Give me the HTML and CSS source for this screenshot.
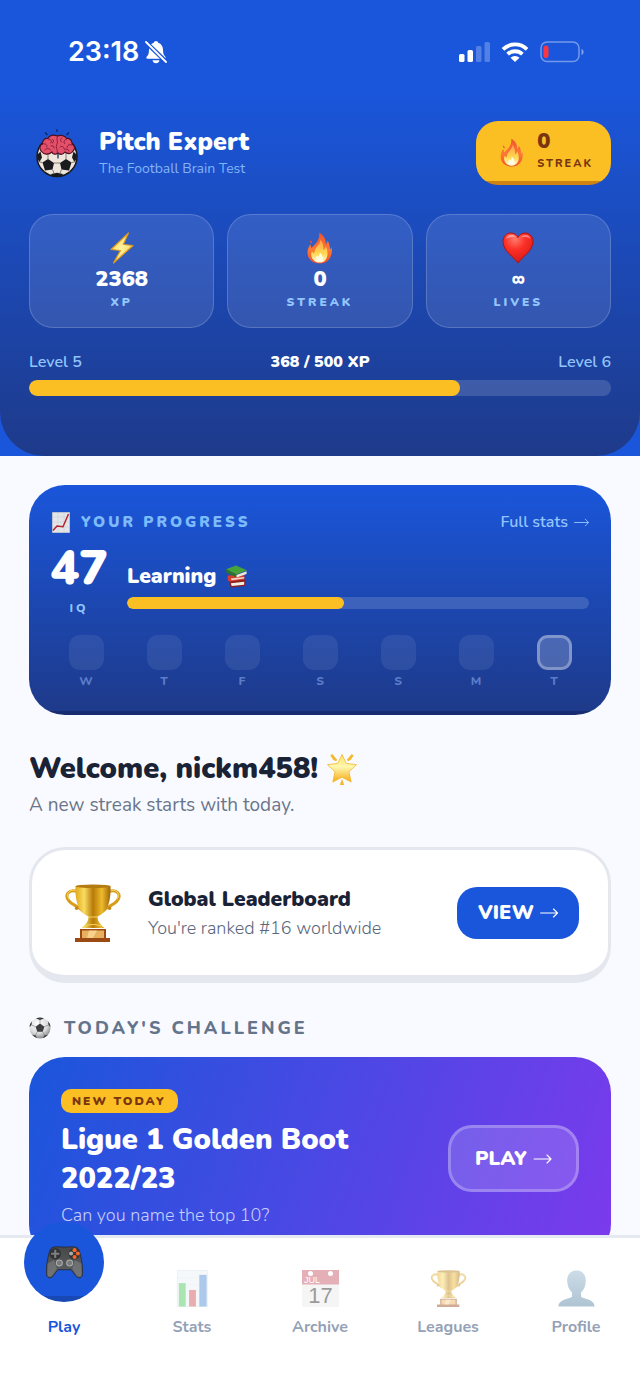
FILE: index.html
```html
<!DOCTYPE html>
<html lang="en">
<head>
<meta charset="utf-8">
<meta name="viewport" content="width=device-width, initial-scale=1">
<title>Pitch Expert</title>
<link rel="stylesheet" href="styles.css">
</head>
<body>
<svg class="defs" aria-hidden="true">
  <defs>
    <linearGradient id="flameOuter" x1="0" y1="0" x2="0" y2="1"><stop offset="0" stop-color="#f2502e"/><stop offset=".55" stop-color="#fb7a35"/><stop offset="1" stop-color="#f4502a"/></linearGradient>
    <linearGradient id="flameInner" x1="0" y1="0" x2="0" y2="1"><stop offset="0" stop-color="#ffa04a"/><stop offset=".6" stop-color="#ffd84f"/><stop offset="1" stop-color="#fffbd0"/></linearGradient>
    <linearGradient id="gold" x1="0" y1="0" x2="1" y2="0"><stop offset="0" stop-color="#e2a91c"/><stop offset=".25" stop-color="#f9dc62"/><stop offset=".5" stop-color="#b87a08"/><stop offset=".75" stop-color="#eebb2c"/><stop offset="1" stop-color="#9c6504"/></linearGradient>
    <linearGradient id="bolt" x1="0" y1="0" x2="1" y2="1"><stop offset="0" stop-color="#ffc928"/><stop offset=".5" stop-color="#fff3a0"/><stop offset="1" stop-color="#f6b21b"/></linearGradient>
    <radialGradient id="heart" cx=".4" cy=".2" r=".9"><stop offset="0" stop-color="#ff7a6e"/><stop offset=".4" stop-color="#fb3027"/><stop offset="1" stop-color="#cf1512"/></radialGradient>
    <linearGradient id="star" x1="0" y1="0" x2="0" y2="1"><stop offset="0" stop-color="#ffe36a"/><stop offset=".45" stop-color="#fff7b0"/><stop offset="1" stop-color="#f5a80f"/></linearGradient>
    <radialGradient id="ball" cx=".4" cy=".3" r=".75"><stop offset="0" stop-color="#ffffff"/><stop offset=".6" stop-color="#dcdcdc"/><stop offset="1" stop-color="#7d7d7d"/></radialGradient>
    <linearGradient id="person" x1="0" y1="0" x2="0" y2="1"><stop offset="0" stop-color="#8fb3cc"/><stop offset="1" stop-color="#4f7d9f"/></linearGradient>
    <linearGradient id="pad" x1="0" y1="0" x2="0" y2="1"><stop offset="0" stop-color="#46484a"/><stop offset="1" stop-color="#5f6163"/></linearGradient>

    <symbol id="i-fire" viewBox="0 0 28 34">
      <path fill="url(#flameOuter)" d="M13 .5c5 3 7.500 7 7 12.500 1.200-1 1.800-2.500 2-4 2.500 3 2.200 6.500 2.800 9.500.8-.6 1.300-1.400 1.500-2.500C28 25.500 23 33.500 14 33.500S0 27.500.8 20.500c.3-3 1.700-5 2.700-7.500.8 1.200 1.200 2.500 1.200 4C9 13.500 14.500 8 13 .5z"/>
      <path fill="#f2502e" d="M3.500 9c1.500.3 2.300 1.500 2 3-1.500 0-2.300-1.500-2-3z"/>
      <path fill="url(#flameInner)" d="M14.500 8c3.500 4.500 3 8.500 3 11 1.500-.8 2.300-2 2.700-3.500 4 8.500 1 17-6.500 17S3 25 5.500 20.500c.7 1.200 1.500 1.700 2.300 2C8 16.500 14.500 14 14.500 8z"/>
      <path fill="#fffde0" d="M14 22c4 4 4.500 10-.3 10s-4.900-4.500-2.700-7c.6.8 1.200 1.200 1.800 1.200C12.800 24.500 13.500 23.500 14 22z"/>
    </symbol>

    <symbol id="i-bolt" viewBox="0 0 24 32">
      <path fill="url(#bolt)" stroke="#e09a1a" stroke-width="1.200" stroke-linejoin="round" d="M18.500 1 1 17.500l9.500 1L3.500 31 23 13.500l-9.800-1z"/>
    </symbol>

    <symbol id="i-heart" viewBox="0 0 32 32">
      <path fill="url(#heart)" stroke="#b3120f" d="M16 31C12 25 1 19 1 9.500 1 4.500 4.500 1 8.700 1c3.300 0 5.800 1.600 7.300 4.500C17.500 2.600 20 1 23.300 1 27.500 1 31 4.500 31 9.500 31 19 20 25 16 31z"/>
      <path fill="#fff" opacity=".4" d="M4 7c.8-3 3-4.300 5-4.200 2.300.1 4 1.200 4.500 2.400C10 4.500 7 5 4 7zm15-1.500c1.300-2 3-2.700 5-2.600 2.300.2 4 1.600 4.600 4C26 5 22 4.700 19 5.500z"/>
    </symbol>

    <symbol id="i-trophy" viewBox="0 0 56 58">
      <g fill="none" stroke="#d89e1b" stroke-width="3" stroke-linecap="round"><path d="M13 8C4 4-1 11 4 17c3 4 9 5 14 10"/><path d="M43 8c9-4 14 3 9 9-3 4-9 5-14 10"/></g>
      <g fill="none" stroke="#f6d667"><path d="M12 7C5 4 0 10 4 15"/><path d="M44 7c7-3 12 3 8 8"/></g>
      <path fill="#c8891a" d="M11.500 26a1.800 1.800 0 1 1 .1 0zM44.500 26a1.800 1.800 0 1 1 .1 0z"/>
      <path fill="url(#gold)" d="M10.500 2h35c.5 14-2 26-13 30.500 0 4 1.500 7 7 11.500h-23c5.500-4.500 7-7.500 7-11.500C12.500 28 10 16 10.500 2z"/>
      <ellipse cx="28" cy="2.200" rx="17.500" ry="1.800" fill="#b47c10"/>
      <path fill="none" stroke="#f5d35c" d="M23 33h10M20 42c5-2 11-2 16 0"/>
      <path fill="#9b4a14" d="M15 45h26v9h4v4H10v-4h5z"/>
      <path fill="#e8b160" d="M17 46.500h22V54H17z"/>
      <path fill="#ffe0a0" opacity=".7" d="M24 46.500h8L28 54h-6z"/>
    </symbol>

    <symbol id="i-chart" viewBox="0 0 18 21">
      <path fill="#e3e5e9" stroke="#b9c2cf" d="M.5.500h17v20H.5z"/>
      <path stroke="#c9d0da" stroke-width=".6" d="M1 5h16M1 10h16M1 15h16M6 1v19M12 1v19"/>
      <path fill="none" stroke="#b8242b" stroke-width="1.500" d="m1 18.500 4-4.500 6 .8L16.500 2"/>
    </symbol>

    <symbol id="i-books" viewBox="0 0 24 24">
      <path fill="#8c1e1e" d="M4 16.500 20 15l2 2-1.500 5L6 23.500z"/><path fill="#f1eee4" d="m6 19 14-1.500v3L7 22z"/>
      <path fill="#d43d2f" d="m3 11 17-1 .5 5L5 17.500c-2 0-3-4-2-6.500z"/><path fill="#f3d4c6" d="m6 14 14-1.500V14L7 16z"/>
      <path fill="#46a33b" d="M1 4.500 11.500.5 23 5.500 12 10z"/><path fill="#2d7428" d="M1 4.500 12 10v3L1.500 8z"/><path fill="#eee9db" d="M12 10.500 22.500 6.500v3L12 13z"/>
    </symbol>

    <symbol id="i-star" viewBox="0 0 32 34">
      <path fill="url(#star)" stroke="#f3b62a" stroke-width=".8" stroke-linejoin="round" d="m16 1.500 4.300 9.200L31 12l-7.800 7.300L25.500 30 16 25l-9.500 5 2.300-10.700L1 12l10.700-1.300z"/>
      <path fill="#f4b92e" d="M4 2.500 6 1l5 6-1 1.500-3-1.300zM28 2.500 26 1l-5 6 1 1.500 3-1.300zM16 26.500l2.300 6.500h-4.600z"/>
    </symbol>

    <symbol id="i-ball" viewBox="0 0 22 22">
      <circle cx="11" cy="11" r="10.500" fill="url(#ball)"/>
      <path fill="#3d3d3f" d="m11 6.500 4.400 3.200-1.700 5H8.300l-1.700-5zM7 1.500 11 3l4-1.500C12.500.3 9.500.3 7 1.500zM.6 10 2.500 8 3 4.500C1.300 6 .4 8 .6 10zm20.800 0L19.500 8 19 4.500c1.700 1.500 2.600 3.500 2.400 5.500zM3.500 18l3 .3L8 21c-1.800-.6-3.300-1.600-4.500-3zm15 0-3 .3L14 21c1.800-.6 3.300-1.600 4.500-3z"/>
      <path fill="none" stroke="#7b7b7b" stroke-width=".6" d="M11 3v3.500M2.500 8l4.100 1.700M19.500 8l-4.100 1.700M6.500 18.300l1.800-3.600M15.500 18.300l-1.800-3.600"/>
    </symbol>

    <symbol id="i-bars" viewBox="0 0 32 38">
      <path fill="#eaf1f4" stroke="#d5e0e5" d="M.5.500h31v37H.5z"/>
      <path stroke="#d9e3e8" stroke-width=".6" d="M1 8h30M1 15h30M1 22h30M1 29h30"/>
      <path fill="#42c455" d="M2 13.500h7v24H2z"/><path fill="#cf4a50" d="M12.500 20.500h7v17h-7z"/><path fill="#4a86d4" d="M23 5h7.500v32.500H23z"/>
    </symbol>

    <symbol id="i-calendar" viewBox="0 0 37 37">
      <path fill="#e9e9e9" d="M0 0h37v37H0z"/><path fill="#c65062" d="M0 0h37v14.500H0z"/>
      <circle cx="8.500" cy="3.500" r="2.500" fill="#fff"/><circle cx="28.500" cy="3.500" r="2.500" fill="#fff"/>
      <text class="cal-text" x="2" y="13" font-size="9" fill="#fff">JUL</text>
      <text class="cal-text" x="18.500" y="33" font-size="22" text-anchor="middle" fill="#222">17</text>
    </symbol>

    <symbol id="i-person" viewBox="0 0 36 37">
      <path fill="url(#person)" d="M18 .5c6 0 9.500 4.200 9.300 10.500-.1 5-2 9-4.800 11.500v4c1 2.500 13.500 2 13.500 10H0c0-8 12.500-7.500 13.500-10v-4C10.700 20 8.800 16 8.700 11 8.500 4.700 12 .5 18 .5z"/>
    </symbol>

    <symbol id="i-pad" viewBox="0 0 36 32">
      <path fill="url(#pad)" stroke="#262a30" stroke-width=".8" d="M6 1.500C10 0 12 1 18 1s8-1 12 .5c3.500 1 6 18.500 5.600 25.500-.3 4.500-4 5-6.600 2L24.500 23h-13L7 29c-2.600 3-6.300 2.500-6.600-2C0 20 2.500 2.500 6 1.500z"/>
      <path fill="#858789" opacity=".5" d="M1.500 17 8 13.500l2.500 8.500L6 28.500c-2 2-4.300 1.500-4.500-1zM34.500 17 28 13.500 25.500 22l4.500 6.500c2 2 4.300 1.500 4.500-1z"/>
      <circle cx="9" cy="7.500" r="5.500" fill="#2f3133"/><circle cx="27.500" cy="7.500" r="5.500" fill="#2f3133"/>
      <path fill="#7d7f81" d="M8 3.500h2v3h3v2h-3v3H8v-3H5v-2h3z"/>
      <circle cx="27.800" cy="4" r="2" fill="#f5662a"/><circle cx="31" cy="7.300" r="2" fill="#f5662a"/><circle cx="24.400" cy="7.300" r="2" fill="#a9abad"/><circle cx="27.800" cy="10.600" r="2" fill="#f5662a"/>
      <g fill="#77797b" stroke="#a9abad"><circle cx="13" cy="16.500" r="2.900"/><circle cx="23" cy="16.500" r="2.900"/></g>
    </symbol>

    <symbol id="i-arrow" viewBox="0 0 18 10">
      <path fill="none" stroke="currentColor" stroke-width="1.100" stroke-linecap="round" stroke-linejoin="round" d="M.6 5h16.800M13.500 1l4 4-4 4"/>
    </symbol>
  </defs>
</svg>

<div class="app">
  <div class="scroll">
    <div class="top">
      <div class="status">
        <div class="status-group">
          <span class="clock">23:18</span>
          <svg width="22" height="24" viewBox="0 0 22 24" role="img" aria-label="Silent">
            <path fill="#fff" d="M11 1c1.200 0 2 .8 2.200 1.800 3.200 1 4.800 3.700 4.800 7 0 4 .8 5.500 2.300 7 .8.900.4 2-.8 2H2.500c-1.200 0-1.600-1.100-.8-2C3.200 15.300 4 13.800 4 9.800c0-3.300 1.600-6 4.800-7C9 1.800 9.800 1 11 1zM7.500 20.300h7c-.3 1.700-1.700 3-3.500 3s-3.200-1.300-3.500-3z"/>
            <path stroke="#1a56db" stroke-width="4.500" d="M0 1.500 22 22.500"/>
            <path stroke="#fff" stroke-width="1.800" stroke-linecap="round" d="M1 2 21 22"/>
          </svg>
        </div>
        <div class="status-group">
          <svg width="32" height="20" viewBox="0 0 32 20" role="img" aria-label="Signal">
            <rect x="1" y="12" width="5.500" height="8" rx="1.600" fill="#fff"/><rect x="9.500" y="8" width="5.500" height="12" rx="1.600" fill="#fff"/>
            <rect x="18" y="4" width="5.500" height="16" rx="1.600" fill="#fff" opacity=".25"/><rect x="26.500" y="0" width="5.500" height="20" rx="1.600" fill="#fff" opacity=".25"/>
          </svg>
          <svg class="wifi" width="28" height="20" viewBox="0 0 28 20" role="img" aria-label="Wi-Fi">
            <g fill="none" stroke="#fff" stroke-width="3.800"><path d="M2 7.300a17.300 17.300 0 0 1 24 0"/><path d="M6.600 12.200a10.700 10.700 0 0 1 14.800 0"/></g>
            <path fill="#fff" d="M14 20 9.500 15.700a6.500 6.500 0 0 1 9 0z"/>
          </svg>
          <svg width="44" height="22" viewBox="0 0 44 22" role="img" aria-label="Battery low">
            <rect x="1" y="1" width="38" height="19.500" rx="6" fill="none" stroke="#fff" stroke-width="1.500" opacity=".4"/>
            <rect x="3.500" y="4.500" width="5" height="12.500" rx="2.500" fill="#fb3640"/>
            <path fill="#fff" opacity=".45" d="M41.500 8c2.800 1 2.800 5 0 6z"/>
          </svg>
        </div>
      </div>

      <header class="header">
        <div class="brand">
          <svg class="logo" viewBox="-1 0 56 62" role="img" aria-label="Pitch Expert logo">
            <circle cx="27" cy="34.500" r="20" fill="#efe6dc" stroke="#191919" stroke-width="1.500"/>
            <path fill="#1b1b1d" d="m12.500 40.500 5.500-3.500 6 4-1.500 6.500-7.500 1zM41.500 40.500 36 37l-6 4 1.500 6.500 7.500 1zM7 33l3.500-3.500 1.500 6-2.500 4.500C8 38 7 35.500 7 33zM47 33l-3.500-3.500-1.500 6 2.500 4.500C46 38 47 35.500 47 33zM21 52l6-1.200 6 1.200-1.500 2.500h-9z"/>
            <path fill="none" stroke="#6b6058" stroke-width=".8" d="M18 37v-7M36 37v-7M24 41h6M22.500 47.500l1.500 3.800M31.500 47.500 30 51.300M12.500 40.500l-3-.5M41.500 40.500l3-.5M15 48.500 14 50M39 48.500l1 1.500"/>
            <g transform="translate(3 1) scale(.9 1)">
              <path fill="#e2506a" stroke="#4b0e1c" stroke-width="1.200" d="M9 28c-3-3-.5-6.500 1.500-7 0-4 3-6 6-5.500 2-3 6-4 10.500-2.500 4-1.500 8.500-.5 10.500 2.500 3.500-.5 6 2 6 5.500 3 1.500 3.500 5 1 7-2 3.500-6.500 3-9 1-2 2.500-5 3-7.500 1-3 2-6 1.500-7-1-3.500 3-9 3-12-1z"/>
              <path fill="none" stroke="#8c1a33" stroke-width="1" stroke-linecap="round" d="M27 13.500c-1.500 3 1.500 5-.5 8s1.500 5 .5 8M17 16c3 0 4 2 3 4M11 21c3-1 5 1 4.500 3M22 16.500c1.500 1 1 3-.5 3.500M13 27c2-2 5-2 6.500 0M20 23c2-1 3 0 3.500 2M32 15c-2 1-2 3 0 4M37 16.500c-2 0-3.500 2-2 4M43 22c-3-1-5 0-5 2.500M30 24c2-1.500 4-.5 4.500 1.500M40 28c-1-2-3-2.500-5-1.500"/>
            </g>
            <path fill="none" stroke="#10204f" stroke-width="1.200" stroke-linecap="round" d="M27 7.500v2M15.500 11l1.500 1.500M38.500 11 37 12.500M28 32v4"/>
          </svg>
          <div class="brand-text">
            <h1>Pitch Expert</h1>
            <p>The Football Brain Test</p>
          </div>
          <div class="streak">
            <svg width="24" height="29"><use href="#i-fire"/></svg>
            <div class="streak-text"><strong>0</strong><span>STREAK</span></div>
          </div>
        </div>

        <div class="stats">
          <div class="stat"><svg width="32" height="32"><use href="#i-bolt"/></svg><strong>2368</strong><span>XP</span></div>
          <div class="stat"><svg width="32" height="32"><use href="#i-fire"/></svg><strong>0</strong><span>STREAK</span></div>
          <div class="stat"><svg width="32" height="32"><use href="#i-heart"/></svg><strong>∞</strong><span>LIVES</span></div>
        </div>

        <div class="levels"><span>Level 5</span><strong>368 / 500 XP</strong><span>Level 6</span></div>
        <div class="bar"><div class="fill" style="width:74%"></div></div>
      </header>
    </div>

    <main class="main">
      <section class="progress">
        <div class="progress-head">
          <svg width="20" height="21"><use href="#i-chart"/></svg>
          <h2>YOUR PROGRESS</h2>
          <a href="#stats">Full stats <svg width="15" height="9"><use href="#i-arrow"/></svg></a>
        </div>
        <div class="iq-row">
          <div class="iq"><strong>47</strong><span>IQ</span></div>
          <div class="rank">
            <div class="rank-name">Learning <svg width="23" height="23"><use href="#i-books"/></svg></div>
            <div class="bar bar-small"><div class="fill" style="width:47%"></div></div>
          </div>
        </div>
        <div class="days">
          <div class="day"><i></i>W</div><div class="day"><i></i>T</div><div class="day"><i></i>F</div><div class="day"><i></i>S</div><div class="day"><i></i>S</div><div class="day"><i></i>M</div><div class="day today"><i></i>T</div>
        </div>
      </section>

      <section class="welcome">
        <h2>Welcome, nickm458! <svg width="32" height="33"><use href="#i-star"/></svg></h2>
        <p>A new streak starts with today.</p>
      </section>

      <section class="board">
        <svg width="56" height="58"><use href="#i-trophy"/></svg>
        <div class="board-text">
          <h3>Global Leaderboard</h3>
          <p>You're ranked #16 worldwide</p>
        </div>
        <button class="btn" type="button">VIEW <svg width="18" height="10"><use href="#i-arrow"/></svg></button>
      </section>

      <h2 class="section-title"><svg width="22" height="22"><use href="#i-ball"/></svg>TODAY'S CHALLENGE</h2>

      <section class="challenge">
        <div class="challenge-text">
          <span class="tag">NEW TODAY</span>
          <h3>Ligue 1 Golden Boot 2022/23</h3>
          <p>Can you name the top 10?</p>
        </div>
        <button class="btn btn-ghost" type="button">PLAY <svg width="19" height="10"><use href="#i-arrow"/></svg></button>
      </section>
    </main>
  </div>

  <nav class="nav">
    <a class="tab active" href="#play"><span class="bubble"><svg width="37" height="33"><use href="#i-pad"/></svg></span>Play</a>
    <a class="tab" href="#stats"><svg width="37" height="37"><use href="#i-bars"/></svg>Stats</a>
    <a class="tab" href="#archive"><svg width="37" height="37"><use href="#i-calendar"/></svg>Archive</a>
    <a class="tab" href="#leagues"><svg width="37" height="37"><use href="#i-trophy"/></svg>Leagues</a>
    <a class="tab" href="#profile"><svg width="37" height="37"><use href="#i-person"/></svg>Profile</a>
  </nav>
</div>
</body>
</html>
```

FILE: styles.css
```css
* { box-sizing: border-box; margin: 0; padding: 0; }

body {
  font-family: Nunito, Lato, "Open Sans", sans-serif;
  background: #f8faff;
  color: #1a2236;
}

svg { display: block; flex: none; }
a { text-decoration: none; }
.defs { position: absolute; width: 0; height: 0; }
.cal-text { font-family: "Liberation Sans", sans-serif; font-weight: 400; }

.app { display: flex; flex-direction: column; height: 100vh; }
.scroll { flex: 1; min-height: 0; overflow-y: auto; scrollbar-width: none; }

/* Top area */
.top { background: #1a56db; color: #fff; }
.status {
  display: flex;
  justify-content: space-between;
  align-items: center;
  height: 92px;
  padding: 12px 56px 0 68px;
}
.status-group { display: flex; align-items: center; gap: 6px; }
.clock { font: 600 27px/32px Inter, sans-serif; }
.wifi { margin: 0 5px; }

.header {
  padding: 29px 29px 60px;
  background: linear-gradient(#1a56db, #1e3a8a);
  border-radius: 0 0 44px 44px;
}
.brand { display: flex; align-items: center; }
.logo { width: 56px; height: 62px; }
.brand-text { flex: 1; padding-left: 14px; }
.brand-text h1 { font-size: 25px; line-height: 32px; font-weight: 900; }
.brand-text p { font-size: 14px; line-height: 22px; color: #83b4f8; }

.streak {
  display: flex;
  align-items: center;
  gap: 13px;
  height: 64px;
  padding: 0 18px 2px 24px;
  border-radius: 22px;
  background: linear-gradient(#fbbf24, #fbbf24) top / 100% calc(100% - 4px) no-repeat #d08310;
  color: #78350f;
}
.streak-text { display: flex; flex-direction: column; }
.streak-text strong { font-size: 22px; line-height: 24px; font-weight: 900; }
.streak-text span { font-size: 11px; line-height: 22px; font-weight: 800; letter-spacing: 2px; }

.stats { display: grid; grid-template-columns: repeat(3, 1fr); gap: 13px; margin-top: 29px; }
.stat {
  display: flex;
  flex-direction: column;
  align-items: center;
  padding: 17px 14px 16px;
  border: 1px solid rgba(255, 255, 255, .18);
  border-radius: 24px;
  background: rgba(255, 255, 255, .1);
}
.stat strong { font-size: 22px; line-height: 30px; font-weight: 900; }
.stat span { font-size: 12px; line-height: 17px; font-weight: 900; letter-spacing: 3px; color: #93c5fd; }

.levels {
  display: flex;
  justify-content: space-between;
  margin: 23px 0 7px;
  font-size: 16px;
  line-height: 22px;
  font-weight: 600;
  color: #93c5fd;
}
.levels strong { font-weight: 900; color: #fff; }

.bar { height: 16px; border-radius: 8px; background: rgba(255, 255, 255, .15); overflow: hidden; }
.bar .fill { height: 100%; border-radius: 8px; background: #fbbf24; }
.bar-small { height: 12px; }

/* Content */
.main { padding: 29px; }

.progress {
  padding: 25px 18px 26px;
  border-radius: 36px;
  background: linear-gradient(#1a56db, #1e3a8a) top / 100% calc(100% - 4px) no-repeat #172c70;
  color: #fff;
}
.progress-head { display: flex; align-items: center; padding: 0 4px; line-height: 24px; }
.progress-head h2 { flex: 1; padding-left: 10px; font-size: 15px; font-weight: 900; letter-spacing: 3px; color: #7dbcfb; }
.progress-head a { display: flex; align-items: center; gap: 6px; font-size: 16px; font-weight: 600; color: #93c5fd; }
.iq-row { display: flex; align-items: flex-end; gap: 20px; padding: 9px 4px 0; }
.iq { display: flex; flex-direction: column; align-items: center; width: 56px; }
.iq strong { font-size: 48px; line-height: 50px; font-weight: 900; }
.iq span { margin-top: 7px; font-size: 12px; line-height: 16px; font-weight: 800; letter-spacing: 3px; color: #93c5fd; }
.rank { flex: 1; padding-bottom: 7px; }
.rank-name { display: flex; align-items: center; gap: 9px; margin-bottom: 7px; font-size: 21px; line-height: 28px; font-weight: 900; }
.days { display: grid; grid-template-columns: repeat(7, 1fr); margin-top: 19px; }
.day { display: flex; flex-direction: column; align-items: center; gap: 3px; font-size: 12px; line-height: 16px; font-weight: 800; color: #5d7cc8; }
.day i { width: 35px; height: 35px; border-radius: 11px; background: rgba(255, 255, 255, .08); }
.today i { border: 3px solid rgba(255, 255, 255, .3); background: rgba(255, 255, 255, .2); }

.welcome { margin-top: 36px; }
.welcome h2 { display: flex; align-items: center; gap: 8px; font-size: 29px; line-height: 36px; font-weight: 900; }
.welcome p { margin-top: 5px; font-size: 19px; line-height: 26px; color: #6b7589; }

.board {
  display: flex;
  align-items: center;
  margin-top: 29px;
  padding: 34px 29px 33px 33px;
  border: 3px solid #e4e8ee;
  border-bottom-width: 8px;
  border-radius: 36px;
  background: #fff;
}
.board-text { flex: 1; padding-left: 27px; }
.board-text h3 { font-size: 21px; line-height: 30px; font-weight: 900; }
.board-text p { font-size: 18px; line-height: 28px; font-weight: 300; color: #5c677c; }

.btn {
  display: flex;
  align-items: center;
  gap: 6px;
  height: 52px;
  padding: 0 21px;
  border: 0;
  border-radius: 20px;
  background: #1a56db;
  color: #fff;
  font: 900 20px/26px Nunito, Lato, "Open Sans", sans-serif;
}
.btn-ghost {
  height: 67px;
  padding: 0 24px;
  border: 3px solid rgba(255, 255, 255, .25);
  border-radius: 24px;
  background: rgba(255, 255, 255, .15);
}

.section-title {
  display: flex;
  align-items: center;
  gap: 13px;
  margin: 33px 0 17px;
  font-size: 18px;
  line-height: 24px;
  font-weight: 800;
  letter-spacing: 3px;
  color: #64748b;
}

.challenge {
  display: flex;
  align-items: center;
  gap: 24px;
  padding: 32px;
  border-radius: 36px;
  background: linear-gradient(110deg, #1a56db, #7c3aed);
  color: #fff;
}
.challenge-text { flex: 1; }
.tag {
  display: inline-block;
  padding: 1px 12px 0 11px;
  border-radius: 10px;
  background: #fbbf24;
  color: #78350f;
  font-size: 12px;
  line-height: 23px;
  font-weight: 900;
  letter-spacing: 2px;
  vertical-align: top;
}
.challenge h3 { max-width: 320px; margin-top: 7px; font-size: 29px; line-height: 39px; font-weight: 900; }
.challenge p { margin-top: 4px; font-size: 18px; line-height: 26px; font-weight: 300; color: #c6cef9; }

/* Bottom tabs */
.nav {
  position: relative;
  display: grid;
  grid-template-columns: repeat(5, 1fr);
  height: 156px;
  border-top: 3px solid #e5e9f1;
  background: #fff;
}
.tab {
  display: flex;
  flex-direction: column;
  align-items: center;
  padding-top: 32px;
  font-size: 16px;
  line-height: 22px;
  font-weight: 700;
  color: #94a1b6;
}
.tab svg { margin-bottom: 9px; opacity: .45; }
.active { padding-top: 0; color: #1a56db; }
.bubble {
  display: flex;
  align-items: center;
  justify-content: center;
  width: 80px;
  height: 80px;
  margin: -16px 0 14px;
  border-radius: 50%;
  background: linear-gradient(#1a56db, #1a56db) top / 100% 74px no-repeat #1748b4;
}
.active .bubble svg { margin: 0; opacity: 1; }
```
